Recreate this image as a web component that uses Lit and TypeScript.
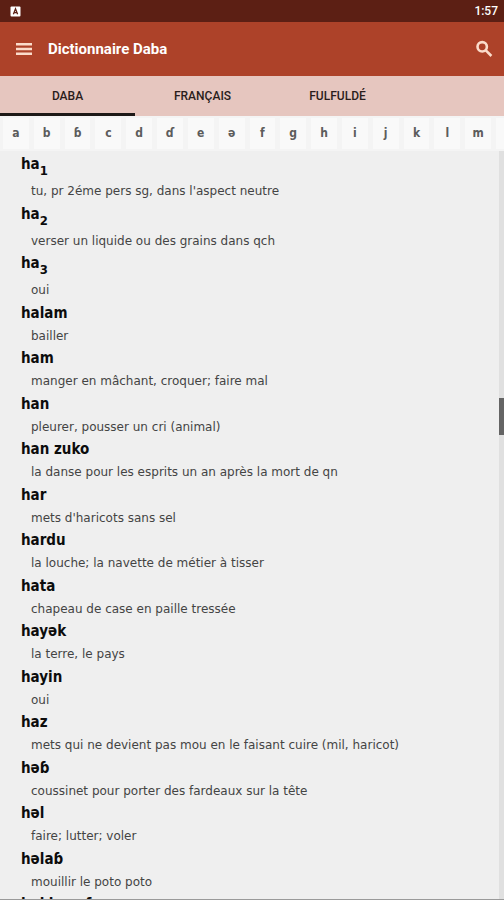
import { LitElement, html, css, nothing } from "lit";
import { customElement, state } from "lit/decorators.js";
import { classMap } from "lit/directives/class-map.js";
import { styleMap } from "lit/directives/style-map.js";

interface Entry {
  word: string;
  index?: number;
  sense: string;
}

const TABS = ["DABA", "FRANÇAIS", "FULFULDÉ"];

const LETTERS = ["a", "b", "ɓ", "c", "d", "ɗ", "e", "ə", "f", "g", "h", "i", "j", "k", "l", "m"];

const ENTRIES: Entry[] = [
  { word: "ha", index: 1, sense: "tu, pr 2éme pers sg, dans l'aspect neutre" },
  { word: "ha", index: 2, sense: "verser un liquide ou des grains dans qch" },
  { word: "ha", index: 3, sense: "oui" },
  { word: "halam", sense: "bailler" },
  { word: "ham", sense: "manger en mâchant, croquer; faire mal" },
  { word: "han", sense: "pleurer, pousser un cri (animal)" },
  { word: "han zuko", sense: "la danse pour les esprits un an après la mort de qn" },
  { word: "har", sense: "mets d'haricots sans sel" },
  { word: "hardu", sense: "la louche; la navette de métier à tisser" },
  { word: "hata", sense: "chapeau de case en paille tressée" },
  { word: "hayək", sense: "la terre, le pays" },
  { word: "hayin", sense: "oui" },
  { word: "haz", sense: "mets qui ne devient pas mou en le faisant cuire (mil, haricot)" },
  { word: "həɓ", sense: "coussinet pour porter des fardeaux sur la tête" },
  { word: "həl", sense: "faire; lutter; voler" },
  { word: "həlaɓ", sense: "mouillir le poto poto" },
  { word: "həkkənaf", sense: "" },
];

@customElement("status-bar")
class StatusBar extends LitElement {
  static styles = css`
    :host {
      display: flex;
      align-items: center;
      justify-content: space-between;
      flex: none;
      height: 22px;
      padding: 0 6px 0 10px;
      background: #5c1f14;
      color: #fff;
      font: 500 12px/22px Roboto, sans-serif;
    }
    .badge {
      display: block;
      width: 11px;
      height: 11px;
    }
  `;

  render() {
    return html`
      <svg class="badge" viewBox="0 0 11 11" aria-hidden="true">
        <rect x="0.5" y="0.5" width="10" height="10" rx="1" fill="#fff" />
        <path d="M3.4 8.3 5.5 2.8 7.6 8.3M4.2 6.6h2.6" fill="none" stroke="#5c1f14" stroke-width="1.3" />
      </svg>
      <time>1:57</time>
    `;
  }
}

@customElement("word-entry")
class WordEntry extends LitElement {
  static properties = { entry: { attribute: false } };
  declare entry: Entry;

  static styles = css`
    :host {
      display: block;
    }
    .word,
    .sense {
      margin: 0;
      white-space: nowrap;
    }
    .word {
      display: flex;
      height: 21px;
      color: #0c0c0c;
      font-size: 15px;
      font-weight: 700;
      line-height: 21px;
    }
    .word.indexed {
      height: 25px;
    }
    .index {
      padding-top: 6px;
      font-size: 13px;
    }
    .sense {
      padding-left: 10px;
      color: #444;
      font-family: "DejaVu Sans", sans-serif;
      font-size: 12px;
      line-height: 24px;
    }
  `;

  render() {
    const { word, index, sense } = this.entry;
    return html`
      <dt class=${classMap({ word: true, indexed: index !== undefined })}>
        ${word}${index ? html`<span class="index">${index}</span>` : nothing}
      </dt>
      <dd class="sense">${sense}</dd>
    `;
  }
}

@customElement("app-root")
class AppRoot extends LitElement {
  @state() private tab = 0;

  private scroll = { start: 33, size: 5 };

  static styles = css`
    :host {
      display: flex;
      flex-direction: column;
      box-sizing: border-box;
      height: 100vh;
      overflow: hidden;
      border-bottom: 1px solid #9a9a9a;
      background: #efefef;
      font-family: "DejaVu Sans Condensed", "DejaVu Sans", sans-serif;
    }
    button {
      margin: 0;
      padding: 0;
      border: 0;
      background: none;
      font: inherit;
      color: inherit;
    }
    .toolbar {
      display: flex;
      align-items: center;
      flex: none;
      height: 54px;
      padding: 0 8px 0 12px;
      background: #ad4229;
      color: #fff;
    }
    .title {
      flex: 1;
      margin: 0 0 0 12px;
      font: 700 15px/20px Roboto, sans-serif;
    }
    .icon-button,
    .icon {
      display: block;
      width: 24px;
      height: 24px;
    }
    .icon {
      fill: #fbdccb;
    }
    .lens {
      fill: none;
      stroke: #fbdccb;
      stroke-width: 2.6;
    }
    .tabs {
      display: flex;
      flex: none;
      background: #e6c6bf;
    }
    .tab {
      box-sizing: border-box;
      width: 135px;
      height: 40px;
      padding-top: 3px;
      border-bottom: 3px solid transparent;
      color: #2a1d1b;
      font: 500 12px/34px Roboto, sans-serif;
    }
    .tab.active {
      border-bottom-color: #1d1917;
    }
    .letters {
      display: flex;
      flex: none;
      gap: 5px;
      padding: 2px 0 2px 3px;
      overflow: hidden;
      background: #f4f4f4;
    }
    .letter {
      flex: 1;
      height: 31px;
      background: #f9f9f9;
      color: #5c5c5c;
      font-size: 12px;
      font-weight: 700;
      line-height: 31px;
    }
    .next {
      flex: 0 0 8px;
      background: #f9f9f9;
    }
    .content {
      display: flex;
      flex: 1;
      min-height: 0;
    }
    .entries {
      flex: 1;
      margin: 0;
      padding: 3px 0 0 21px;
      overflow: hidden;
    }
    .entry:nth-child(odd) {
      padding-bottom: 1px;
    }
    .track {
      flex: none;
      width: 5px;
      background: #e0e0e0;
    }
    .thumb {
      position: relative;
      background: #646464;
    }
  `;

  render() {
    const thumb = { top: `${this.scroll.start}%`, height: `${this.scroll.size}%` };
    return html`
      <status-bar></status-bar>
      <header class="toolbar">
        <button class="icon-button" aria-label="Menu">
          <svg class="icon" viewBox="0 0 24 24"><path d="M4 6h16v2.4H4zM4 10.8h16v2.4H4zM4 15.600h16V18H4z" /></svg>
        </button>
        <h1 class="title">Dictionnaire Daba</h1>
        <button class="icon-button" aria-label="Rechercher">
          <svg class="icon" viewBox="0 0 24 24">
            <circle class="lens" cx="10.200" cy="9.800" r="4.700" />
            <path class="lens" d="m13.600 13.200 5.800 5.800" />
          </svg>
        </button>
      </header>
      <nav class="tabs">
        ${TABS.map(
          (name, i) => html`
            <button class=${classMap({ tab: true, active: i === this.tab })} @click=${() => (this.tab = i)}>
              ${name}
            </button>
          `
        )}
      </nav>
      <nav class="letters">
        ${LETTERS.map((letter) => html`<button class="letter">${letter}</button>`)}
        <span class="next"></span>
      </nav>
      <main class="content">
        <dl class="entries">
          ${ENTRIES.map((entry) => html`<word-entry class="entry" .entry=${entry}></word-entry>`)}
        </dl>
        <div class="track"><div class="thumb" style=${styleMap(thumb)}></div></div>
      </main>
    `;
  }
}
